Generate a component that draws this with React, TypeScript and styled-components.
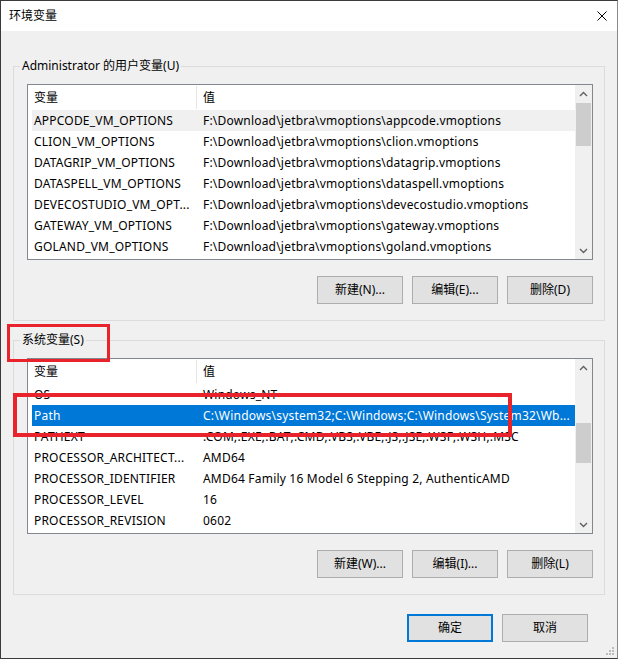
import React from "react";
import styled, { createGlobalStyle } from "styled-components";

const GlobalStyle = createGlobalStyle`
  html, body { margin: 0; padding: 0; background: #ffffff; }
  body {
    font-family: "Noto Sans", "Noto Sans CJK SC", sans-serif;
    font-size: 12px;
    color: #000;
  }
  * { box-sizing: border-box; }
`;

const Window = styled.div`
  position: relative;
  width: 618px;
  height: 659px;
  border: 1px solid #3a3a3a;
  border-right-color: #8a8a8a;
  display: flex;
  flex-direction: column;
  background: #f0f0f0;
`;

const TitleBar = styled.div`
  height: 30px;
  flex: none;
  background: #ffffff;
  display: flex;
  align-items: center;
  justify-content: space-between;
  padding: 0 10px 0 8px;
`;

const Title = styled.span`
  font-size: 12px;
  line-height: 16px;
`;

const CloseButton = styled.div`
  width: 10px;
  height: 10px;
  display: flex;
`;

const Body = styled.div`
  flex: 1;
  display: flex;
  flex-direction: column;
  padding: 35px 12px 0 12px;
`;

const Group = styled.section<{ $gap?: number }>`
  border: 1px solid #dcdcdc;
  padding: 0 11px 16px 13px;
  margin-top: ${(p) => p.$gap ?? 0}px;
`;

const Legend = styled.div`
  width: fit-content;
  height: 16px;
  line-height: 16px;
  margin: -9px 0 0 -7px;
  padding: 0 2px;
  background: #f0f0f0;
  white-space: nowrap;
`;

const ListBox = styled.div`
  margin-top: 10px;
  height: 176px;
  border: 1px solid #828790;
  background: #ffffff;
  display: flex;
`;

const ListContent = styled.div`
  flex: 1;
  min-width: 0;
  overflow: hidden;
`;

const HeaderRow = styled.div`
  display: grid;
  grid-template-columns: 169px 1fr;
  height: 25px;
  padding: 1px 0;
`;

const HeaderCell = styled.div<{ $divider?: boolean }>`
  display: flex;
  align-items: center;
  padding-left: 6px;
  line-height: 16px;
  border-right: ${(p) => (p.$divider ? "1px solid #e5e5e5" : "none")};
`;

type RowState = "normal" | "hover" | "selected";

const Row = styled.div<{ $state: RowState }>`
  display: grid;
  grid-template-columns: 165px 1fr;
  align-items: center;
  height: 21px;
  margin-left: 4px;
  white-space: nowrap;
  line-height: 16px;
  letter-spacing: 0.2px;
  background: ${(p) =>
    p.$state === "selected" ? "#0078d7" : p.$state === "hover" ? "#f0f0f0" : "transparent"};
  color: ${(p) => (p.$state === "selected" ? "#ffffff" : "#000000")};
`;

const NameCell = styled.span`
  padding-left: 2px;
  overflow: hidden;
`;

const ValueCell = styled.span`
  padding-left: 6px;
  overflow: hidden;
`;

const ScrollBar = styled.div`
  width: 17px;
  flex: none;
  background: #f0f0f0;
  display: flex;
  flex-direction: column;
`;

const ScrollArrow = styled.div`
  height: 17px;
  flex: none;
  display: flex;
  align-items: center;
  justify-content: center;
`;

const ScrollTrack = styled.div`
  flex: 1;
  min-height: 0;
`;

const Thumb = styled.div<{ $top: number; $height: number }>`
  margin: ${(p) => p.$top}px 1px 0 1px;
  height: ${(p) => p.$height}px;
  background: #cdcdcd;
`;

const ButtonRow = styled.div<{ $top: number; $right?: number }>`
  display: flex;
  justify-content: flex-end;
  gap: 9px;
  margin-top: ${(p) => p.$top}px;
  padding-right: ${(p) => p.$right ?? 0}px;
`;

const Button = styled.button<{ $primary?: boolean }>`
  width: 86px;
  height: 28px;
  padding: 0;
  background: #e1e1e1;
  border: ${(p) => (p.$primary ? "2px solid #0078d7" : "1px solid #adadad")};
  font-family: inherit;
  font-size: 12px;
  line-height: 16px;
  color: #000;
`;

const Highlight = styled.div<{ $x: number; $y: number; $w: number; $h: number; $stroke: number }>`
  position: absolute;
  left: ${(p) => p.$x}px;
  top: ${(p) => p.$y}px;
  width: ${(p) => p.$w}px;
  height: ${(p) => p.$h}px;
  border: ${(p) => p.$stroke}px solid #e8232b;
  pointer-events: none;
`;

const Grip = styled.svg`
  position: absolute;
  right: 2px;
  bottom: 2px;
`;

const ChevronUp = () => (
  <svg width="9" height="6" viewBox="0 0 9 6">
    <polyline points="1,5 4.5,1.5 8,5" fill="none" stroke="#606060" strokeWidth="1.4" />
  </svg>
);

const ChevronDown = () => (
  <svg width="9" height="6" viewBox="0 0 9 6">
    <polyline points="1,1 4.5,4.5 8,1" fill="none" stroke="#606060" strokeWidth="1.4" />
  </svg>
);

type Item = { name: string; value: string; state?: RowState };

const VarList = ({ items, thumbTop, thumbHeight }: { items: Item[]; thumbTop: number; thumbHeight: number }) => (
  <ListBox>
    <ListContent>
      <HeaderRow>
        <HeaderCell $divider>变量</HeaderCell>
        <HeaderCell>值</HeaderCell>
      </HeaderRow>
      {items.map((it) => (
        <Row key={it.name} $state={it.state ?? "normal"}>
          <NameCell>{it.name}</NameCell>
          <ValueCell>{it.value}</ValueCell>
        </Row>
      ))}
    </ListContent>
    <ScrollBar>
      <ScrollArrow>
        <ChevronUp />
      </ScrollArrow>
      <ScrollTrack>
        <Thumb $top={thumbTop} $height={thumbHeight} />
      </ScrollTrack>
      <ScrollArrow>
        <ChevronDown />
      </ScrollArrow>
    </ScrollBar>
  </ListBox>
);

const userVars: Item[] = [
  { name: "APPCODE_VM_OPTIONS", value: "F:\\Download\\jetbra\\vmoptions\\appcode.vmoptions", state: "hover" },
  { name: "CLION_VM_OPTIONS", value: "F:\\Download\\jetbra\\vmoptions\\clion.vmoptions" },
  { name: "DATAGRIP_VM_OPTIONS", value: "F:\\Download\\jetbra\\vmoptions\\datagrip.vmoptions" },
  { name: "DATASPELL_VM_OPTIONS", value: "F:\\Download\\jetbra\\vmoptions\\dataspell.vmoptions" },
  { name: "DEVECOSTUDIO_VM_OPT...", value: "F:\\Download\\jetbra\\vmoptions\\devecostudio.vmoptions" },
  { name: "GATEWAY_VM_OPTIONS", value: "F:\\Download\\jetbra\\vmoptions\\gateway.vmoptions" },
  { name: "GOLAND_VM_OPTIONS", value: "F:\\Download\\jetbra\\vmoptions\\goland.vmoptions" },
];

const systemVars: Item[] = [
  { name: "OS", value: "Windows_NT" },
  { name: "Path", value: "C:\\Windows\\system32;C:\\Windows;C:\\Windows\\System32\\Wb...", state: "selected" },
  { name: "PATHEXT", value: ".COM;.EXE;.BAT;.CMD;.VBS;.VBE;.JS;.JSE;.WSF;.WSH;.MSC" },
  { name: "PROCESSOR_ARCHITECT...", value: "AMD64" },
  { name: "PROCESSOR_IDENTIFIER", value: "AMD64 Family 16 Model 6 Stepping 2, AuthenticAMD" },
  { name: "PROCESSOR_LEVEL", value: "16" },
  { name: "PROCESSOR_REVISION", value: "0602" },
];

export default function App() {
  return (
    <>
      <GlobalStyle />
      <Window>
        <TitleBar>
          <Title>环境变量</Title>
          <CloseButton>
            <svg width="10" height="10" viewBox="0 0 10 10">
              <path d="M0.5 0.5 L9.5 9.5 M9.5 0.5 L0.5 9.5" stroke="#000" strokeWidth="1" />
            </svg>
          </CloseButton>
        </TitleBar>
        <Body>
          <Group>
            <Legend>Administrator 的用户变量(U)</Legend>
            <VarList items={userVars} thumbTop={1} thumbHeight={43} />
            <ButtonRow $top={16}>
              <Button>新建(N)...</Button>
              <Button>编辑(E)...</Button>
              <Button>删除(D)</Button>
            </ButtonRow>
          </Group>
          <Group $gap={19}>
            <Legend>系统变量(S)</Legend>
            <VarList items={systemVars} thumbTop={47} thumbHeight={40} />
            <ButtonRow $top={16}>
              <Button>新建(W)...</Button>
              <Button>编辑(I)...</Button>
              <Button>删除(L)</Button>
            </ButtonRow>
          </Group>
          <ButtonRow $top={19} $right={17}>
            <Button $primary>确定</Button>
            <Button>取消</Button>
          </ButtonRow>
        </Body>
        <Highlight $x={6} $y={323} $w={103} $h={38} $stroke={3} />
        <Highlight $x={12} $y={392} $w={499} $h={44} $stroke={4} />
        <Grip width="10" height="10" viewBox="0 0 10 10">
          <rect x="7" y="1" width="2" height="2" fill="#bcbcbc" />
          <rect x="4" y="4" width="2" height="2" fill="#bcbcbc" />
          <rect x="7" y="4" width="2" height="2" fill="#bcbcbc" />
          <rect x="1" y="7" width="2" height="2" fill="#bcbcbc" />
          <rect x="4" y="7" width="2" height="2" fill="#bcbcbc" />
          <rect x="7" y="7" width="2" height="2" fill="#bcbcbc" />
        </Grip>
      </Window>
    </>
  );
}
